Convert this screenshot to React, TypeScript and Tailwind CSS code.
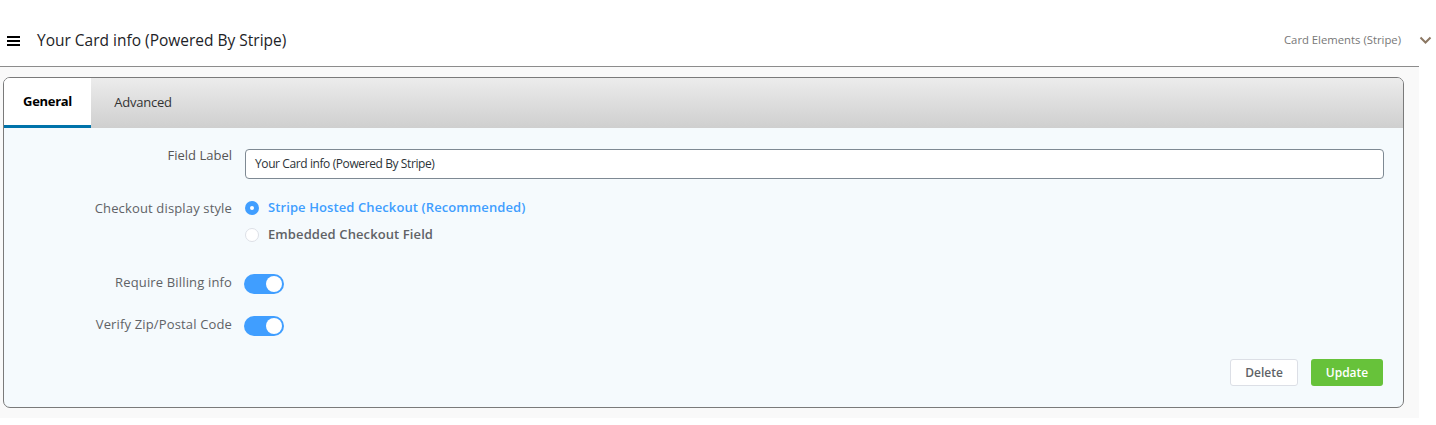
import React from "react";

const font = { fontFamily: '"Open Sans", "Noto Sans", sans-serif' };

function Toggle() {
  return (
    <div className="relative w-[40px] h-[20px] rounded-full bg-[#409eff]">
      <div className="absolute right-[2px] top-[2px] w-[16px] h-[16px] rounded-full bg-white" />
    </div>
  );
}

export default function App() {
  return (
    <div className="w-[1436px] h-[425px] bg-white text-[#1e1e1e]" style={font}>
      <div className="w-[1419px]">
        <div className="h-[67px] flex items-center pt-[15px] border-b border-[#8c8c8c]">
          <div className="ml-[7px] w-[13px] flex flex-col gap-[2px]">
            <div className="h-[2px] bg-black" />
            <div className="h-[2px] bg-black" />
            <div className="h-[2px] bg-black" />
          </div>
          <div className="ml-[17px] text-[15.5px] text-[#1d2327]">Your Card info (Powered By Stripe)</div>
          <div className="ml-auto text-[11.3px] text-[#777]">Card Elements (Stripe)</div>
          <svg className="ml-[18px] mr-[-13px]" width="13" height="9" viewBox="0 0 13 9">
            <path d="M1.5 1.5 L6.5 6.5 L11.5 1.5" stroke="#8b7763" strokeWidth="2" fill="none" />
          </svg>
        </div>
        <div className="bg-[#f9f9f9] h-[351px] pt-[10px] pl-[3px] pr-[15px]">
          <div className="border border-[#7a7a7a] rounded-[7px] overflow-hidden h-[331px] bg-[#f5fafd] flex flex-col">
            <div className="h-[50px] flex bg-gradient-to-b from-[#ececec] to-[#cfcfcf]">
              <div className="w-[87px] bg-white border-b-[3px] border-[#0073aa] flex items-center justify-center text-[13px] font-bold text-black tracking-[-0.3px]">General</div>
              <div className="w-[104px] flex items-center justify-center text-[13px] text-[#333] tracking-[-0.2px]">Advanced</div>
            </div>
            <div className="flex-1 flex flex-col pr-[19px]">
              <div className="flex mt-[21px]">
                <div className="w-[228px] text-right text-[13px] text-[#555] leading-[14px] mt-[-1px]">Field Label</div>
                <div className="ml-[13px] flex-1 h-[30px] bg-white border border-[#7e8993] rounded-[4px] flex items-center pl-[9px] text-[12px] text-[#2c3338] tracking-[-0.4px]">
                  Your Card info (Powered By Stripe)
                </div>
              </div>
              <div className="flex mt-[21px]">
                <div className="w-[228px] text-right text-[13px] text-[#606266] leading-[16px] tracking-[0.15px]">Checkout display style</div>
                <div className="ml-[13px] flex flex-col gap-[11px]">
                  <div className="flex items-center h-[16px]">
                    <div className="w-[14px] h-[14px] rounded-full bg-[#409eff] flex items-center justify-center">
                      <div className="w-[4px] h-[4px] rounded-full bg-white" />
                    </div>
                    <div className="ml-[9px] text-[13px] font-semibold text-[#409eff] tracking-[0.1px]">Stripe Hosted Checkout (Recommended)</div>
                  </div>
                  <div className="flex items-center h-[16px]">
                    <div className="w-[14px] h-[14px] rounded-full bg-white border border-[#dcdfe6]" />
                    <div className="ml-[9px] text-[13px] font-semibold text-[#606266] tracking-[0.1px]">Embedded Checkout Field</div>
                  </div>
                </div>
              </div>
              <div className="flex items-center mt-[31px]">
                <div className="w-[228px] text-right text-[13px] text-[#606266] mt-[-3px] tracking-[0.15px]">Require Billing info</div>
                <div className="ml-[12px]"><Toggle /></div>
              </div>
              <div className="flex items-center mt-[22px]">
                <div className="w-[228px] text-right text-[13px] text-[#606266] mt-[-3px] tracking-[0.15px]">Verify Zip/Postal Code</div>
                <div className="ml-[12px]"><Toggle /></div>
              </div>
              <div className="flex justify-end gap-[13px] mt-[23px] mr-[1px]">
                <div className="w-[68px] h-[27px] bg-white border border-[#dcdfe6] rounded-[3px] flex items-center justify-center text-[12px] font-semibold text-[#606266]">Delete</div>
                <div className="w-[72px] h-[27px] bg-[#67c23a] rounded-[3px] flex items-center justify-center text-[12px] font-semibold text-white">Update</div>
              </div>
            </div>
          </div>
        </div>
      </div>
    </div>
  );
}
